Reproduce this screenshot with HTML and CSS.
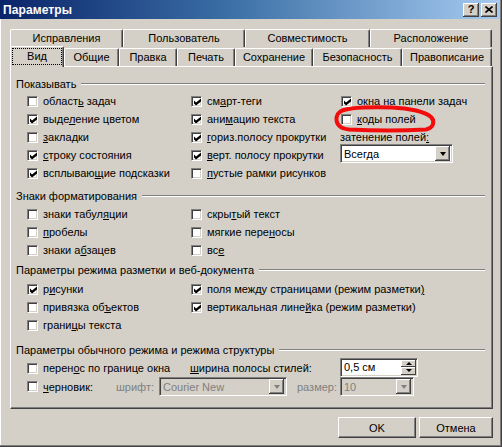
FILE: index.html
```html
<!DOCTYPE html>
<html lang="ru">
<head>
<meta charset="utf-8">
<title>Параметры</title>
<link rel="stylesheet" href="styles.css">
</head>
<body>
<div class="window">
  <div class="titlebar">
    <span class="title">Параметры</span>
    <div class="tb-buttons">
      <span class="tb-btn">?</span>
      <span class="tb-btn"><svg width="8" height="7" viewBox="0 0 8 7"><path d="M0.5 0.5 L7.5 6.5 M7.5 0.5 L0.5 6.5" stroke="#000" stroke-width="1.6"/></svg></span>
    </div>
  </div>

  <div class="client">
    <div class="tabs">
      <div class="tab-row back">
        <div class="tab">Исправления</div>
        <div class="tab">Пользователь</div>
        <div class="tab">Совместимость</div>
        <div class="tab">Расположение</div>
      </div>
      <div class="tab-row front">
        <div class="tab active"><span class="focus">Вид</span></div>
        <div class="tab">Общие</div>
        <div class="tab">Правка</div>
        <div class="tab">Печать</div>
        <div class="tab">Сохранение</div>
        <div class="tab">Безопасность</div>
        <div class="tab">Правописание</div>
      </div>
    </div>

    <div class="panel">
      <section class="group g1">
        <div class="group-head"><span>Показывать</span><i class="etch"></i></div>
        <div class="opts">
          <label class="cb"><span class="box"></span><span>област<u>ь</u> задач</span></label>
          <label class="cb"><span class="box on"></span><span>см<u>а</u>рт-теги</span></label>
          <label class="cb"><span class="box on"></span><span>окна на панели задач</span></label>

          <label class="cb"><span class="box on"></span><span>выде<u>л</u>ение цветом</span></label>
          <label class="cb"><span class="box on"></span><span>ани<u>м</u>ацию текста</span></label>
          <label class="cb"><span class="box"></span><span><u>к</u>оды полей</span></label>

          <label class="cb"><span class="box"></span><span><u>з</u>акладки</span></label>
          <label class="cb"><span class="box on"></span><span><u>г</u>ориз.полосу прокрутки</span></label>
          <span class="plain shade-label"><span>затенение полей<u>:</u></span></span>

          <label class="cb"><span class="box on"></span><span><u>с</u>троку состояния</span></label>
          <label class="cb"><span class="box on"></span><span><u>в</u>ерт. полосу прокрутки</span></label>
          <div class="combo shade"><span class="combo-text">Всегда</span><span class="drop"><i class="arrow-down"></i></span></div>

          <label class="cb"><span class="box on"></span><span>всплываю<u>щ</u>ие подсказки</span></label>
          <label class="cb"><span class="box"></span><span><u>п</u>устые рамки рисунков</span></label>
        </div>
      </section>

      <section class="group g2">
        <div class="group-head"><span>Знаки форматирования</span><i class="etch"></i></div>
        <div class="opts">
          <label class="cb"><span class="box"></span><span>знаки табул<u>я</u>ции</span></label>
          <label class="cb"><span class="box"></span><span>скры<u>т</u>ый текст</span></label>
          <span></span>
          <label class="cb"><span class="box"></span><span><u>п</u>робелы</span></label>
          <label class="cb"><span class="box"></span><span>мягкие пере<u>н</u>осы</span></label>
          <span></span>
          <label class="cb"><span class="box"></span><span>знаки а<u>б</u>зацев</span></label>
          <label class="cb"><span class="box"></span><span>вс<u>е</u></span></label>
        </div>
      </section>

      <section class="group g3">
        <div class="group-head"><span>Параметры режима разметки и веб-документа</span><i class="etch"></i></div>
        <div class="opts">
          <label class="cb"><span class="box on"></span><span>р<u>и</u>сунки</span></label>
          <label class="cb wide"><span class="box on"></span><span>поля между страницами (режим разметки<u>)</u></span></label>
          <label class="cb"><span class="box"></span><span>привязка об<u>ъ</u>ектов</span></label>
          <label class="cb wide"><span class="box on"></span><span>вертикальная лине<u>й</u>ка (режим разметки)</span></label>
          <label class="cb"><span class="box"></span><span>грани<u>ц</u>ы текста</span></label>
        </div>
      </section>

      <section class="group g4">
        <div class="group-head"><span>Параметры обычного режима и режима структуры</span><i class="etch"></i></div>
        <div class="row-a">
          <label class="cb"><span class="box"></span><span>перен<u>о</u>с по границе окна</span></label>
          <span class="plain"><span><u>ш</u>ирина полосы стилей:</span></span>
          <div class="spin"><span class="spin-text">0,5 см</span><span class="spin-btns"><span class="sbtn"><i class="arrow-up"></i></span><span class="sbtn"><i class="arrow-down"></i></span></span></div>
        </div>
        <div class="row-b">
          <label class="cb"><span class="box"></span><span><u>ч</u>ерновик:</span></label>
          <span class="plain disabled">шрифт:</span>
          <div class="combo off font"><span class="combo-text">Courier New</span><span class="drop"><i class="arrow-down"></i></span></div>
          <span class="plain disabled">размер:</span>
          <div class="combo off size"><span class="combo-text">10</span><span class="drop"><i class="arrow-down"></i></span></div>
        </div>
      </section>
    </div>

    <div class="actions">
      <button class="btn ok">OK</button>
      <button class="btn cancel">Отмена</button>
    </div>
  </div>

  <svg class="annotation" width="502" height="447" viewBox="0 0 502 447">
    <path d="M340 112 C 346 107, 372 107, 392 107.5 C 410 108, 425 112, 431 117 C 435 121, 434 128, 426 129.5 C 405 130.5, 372 130.5, 349 129.5 C 339 128.5, 336 124, 336.5 117.5 C 337 112, 341 110, 348 109" fill="none" stroke="#f20c0c" stroke-width="4" stroke-linecap="round"/>
  </svg>
</div>
</body>
</html>
```

FILE: styles.css
```css
* { box-sizing: border-box; }

html, body {
  margin: 0;
  padding: 0;
}

body {
  width: 502px;
  height: 447px;
  overflow: hidden;
  background: #d4d0c8;
  font-family: "Liberation Sans", Arial, sans-serif;
  font-size: 11px;
  color: #000;
}

.window {
  position: relative;
  width: 502px;
  height: 447px;
  background: #d4d0c8;
  border-right: 1px solid #404040;
  border-bottom: 1px solid #404040;
  box-shadow: inset -1px -1px 0 #808080, inset 1px 0 0 #ffffff;
}

/* title bar */
.titlebar {
  height: 19px;
  display: flex;
  align-items: center;
  justify-content: space-between;
  padding: 0 3px 0 3px;
  margin-right: 1px;
  background: linear-gradient(to right, #0a246a 0%, #3a6ea5 45%, #a6caf0 100%);
}

.title {
  color: #fff;
  font-weight: bold;
  font-size: 12px;
  letter-spacing: 0.1px;
}

.tb-buttons {
  display: flex;
  gap: 2px;
}

.tb-btn {
  width: 16px;
  height: 14px;
  display: flex;
  align-items: center;
  justify-content: center;
  background: #d4d0c8;
  font-weight: bold;
  font-size: 11px;
  line-height: 1;
  box-shadow: inset -1px -1px 0 #404040, inset 1px 1px 0 #ffffff, inset -2px -2px 0 #808080;
}

/* client area */
.client {
  padding: 9px 8px 0 10px;
}

.tabs {
  display: flex;
  flex-direction: column;
  height: 38px;
}

.tab-row {
  display: flex;
}

.tab-row.back {
  margin-top: 1px;
  height: 18px;
}

.tab-row.front {
  height: 19px;
}

.tab {
  height: 18px;
  display: flex;
  align-items: center;
  justify-content: center;
  border-top: 1px solid #fff;
  border-left: 1px solid #fff;
  border-right: 1px solid #404040;
  border-radius: 2px 2px 0 0;
  box-shadow: inset -1px 0 0 #808080;
  background: #d4d0c8;
  padding-bottom: 1px;
}

.back .tab:nth-child(1) { width: 113px; }
.back .tab:nth-child(2) { width: 122px; }
.back .tab:nth-child(3) { width: 125px; }
.back .tab:nth-child(4) { width: 122px; }

.front .tab { margin-top: 1px; }
.front .tab:nth-child(1) { width: 54px; }
.front .tab:nth-child(2) { width: 55px; }
.front .tab:nth-child(3) { width: 58px; }
.front .tab:nth-child(4) { width: 58px; }
.front .tab:nth-child(5) { width: 78px; }
.front .tab:nth-child(6) { width: 89px; }
.front .tab:nth-child(7) { width: 90px; }

.tab.active {
  position: relative;
  z-index: 2;
  margin-top: -1px;
  height: 21px;
  padding-bottom: 2px;
}

.focus {
  display: flex;
  align-items: center;
  justify-content: center;
  width: 48px;
  height: 15px;
  outline: 1px dotted #000;
  outline-offset: 0;
}

/* panel */
.panel {
  width: 483px;
  height: 343px;
  border-top: 1px solid #fff;
  border-left: 1px solid #fff;
  border-right: 1px solid #404040;
  border-bottom: 1px solid #404040;
  box-shadow: inset -1px -1px 0 #808080;
  padding: 10px 7px 0 5px;
}

.group-head {
  display: flex;
  align-items: center;
  height: 14px;
  line-height: 14px;
  white-space: nowrap;
}

.etch {
  flex: 1;
  height: 2px;
  margin-left: 5px;
  border-top: 1px solid #808080;
  border-bottom: 1px solid #fff;
}

.opts {
  display: grid;
  grid-template-columns: 164px 150px 1fr;
  grid-auto-rows: 18px;
  padding-left: 11px;
  margin-top: 1px;
}

.g2 { margin-top: 7px; }
.g2 .opts { margin-top: 2px; }
.g3 { margin-top: 4px; }
.g3 .opts { margin-top: 3px; }
.g4 { margin-top: 9px; }

.cb {
  display: flex;
  align-items: center;
  white-space: nowrap;
}

.cb.wide { grid-column: 2 / 4; }

.box {
  flex: none;
  width: 11px;
  height: 11px;
  margin-right: 5px;
  background: #fff;
  border-top: 1px solid #808080;
  border-left: 1px solid #808080;
  border-right: 1px solid #fff;
  border-bottom: 1px solid #fff;
  box-shadow: inset 1px 1px 0 #404040, inset -1px -1px 0 #d4d0c8;
  position: relative;
}

.box.on::after {
  content: "";
  position: absolute;
  left: 2px;
  top: 2px;
  width: 7px;
  height: 7px;
  background: #000;
  clip-path: polygon(0 29%, 29% 57%, 100% 0, 100% 43%, 29% 100%, 0 71%);
}

.plain {
  display: flex;
  align-items: center;
  white-space: nowrap;
}

.shade-label { margin-left: -1px; }

u { text-decoration: underline; text-underline-offset: 1px; }

/* combo boxes */
.combo {
  display: flex;
  align-items: center;
  justify-content: space-between;
  height: 19px;
  background: #fff;
  border-top: 1px solid #808080;
  border-left: 1px solid #808080;
  border-right: 1px solid #fff;
  border-bottom: 1px solid #fff;
  box-shadow: inset 1px 1px 0 #404040, inset -1px -1px 0 #d4d0c8;
  padding: 2px 2px 2px 3px;
}

.combo.shade {
  width: 113px;
  margin-left: -1px;
  margin-top: -2px;
}

.combo-text { white-space: nowrap; }

.drop {
  width: 15px;
  height: 15px;
  display: flex;
  align-items: center;
  justify-content: center;
  background: #d4d0c8;
  box-shadow: inset -1px -1px 0 #404040, inset 1px 1px 0 #fff, inset -2px -2px 0 #808080;
}

.arrow-down {
  width: 0;
  height: 0;
  border-left: 3.5px solid transparent;
  border-right: 3.5px solid transparent;
  border-top: 4px solid #000;
}

.arrow-up {
  width: 0;
  height: 0;
  border-left: 3px solid transparent;
  border-right: 3px solid transparent;
  border-bottom: 3px solid #000;
}

.combo.off {
  background: #d4d0c8;
  color: #808080;
}

.combo.off .arrow-down { border-top-color: #808080; }

.combo.font { width: 128px; }
.combo.size { width: 74px; }

.disabled { color: #808080; }

/* row A / row B of last group */
.row-a {
  display: grid;
  grid-template-columns: 163px 150px auto;
  height: 20px;
  margin-top: -1px;
  padding-left: 11px;
  align-items: center;
}

.row-a .cb, .row-a .plain { height: 20px; margin-top: 2px; }

.row-b {
  display: grid;
  grid-template-columns: 89px 43px 138px 43px auto;
  height: 21px;
  padding-left: 11px;
  align-items: center;
}

.spin {
  display: flex;
  align-items: center;
  justify-content: space-between;
  width: 78px;
  height: 19px;
  background: #fff;
  border-top: 1px solid #808080;
  border-left: 1px solid #808080;
  border-right: 1px solid #fff;
  border-bottom: 1px solid #fff;
  box-shadow: inset 1px 1px 0 #404040, inset -1px -1px 0 #d4d0c8;
  padding: 1px 1px 1px 3px;
}

.spin-btns {
  display: flex;
  flex-direction: column;
  width: 15px;
  height: 15px;
}

.sbtn {
  flex: 1;
  display: flex;
  align-items: center;
  justify-content: center;
  background: #d4d0c8;
  box-shadow: inset -1px -1px 0 #404040, inset 1px 1px 0 #fff;
}

.sbtn .arrow-down {
  border-left-width: 3px;
  border-right-width: 3px;
  border-top-width: 3px;
}

/* buttons */
.actions {
  display: flex;
  justify-content: flex-end;
  gap: 3px;
  margin-top: 8px;
}

.btn {
  height: 21px;
  padding: 0;
  font-family: inherit;
  font-size: 11px;
  color: #000;
  background: #d4d0c8;
  border: 1px solid;
  border-color: #fff #404040 #404040 #fff;
  box-shadow: inset -1px -1px 0 #808080;
}

.btn.ok { width: 78px; }
.btn.cancel { width: 74px; }

/* annotation marker drawn over the dialog */
.annotation {
  position: absolute;
  left: 0;
  top: 0;
  pointer-events: none;
}
```
